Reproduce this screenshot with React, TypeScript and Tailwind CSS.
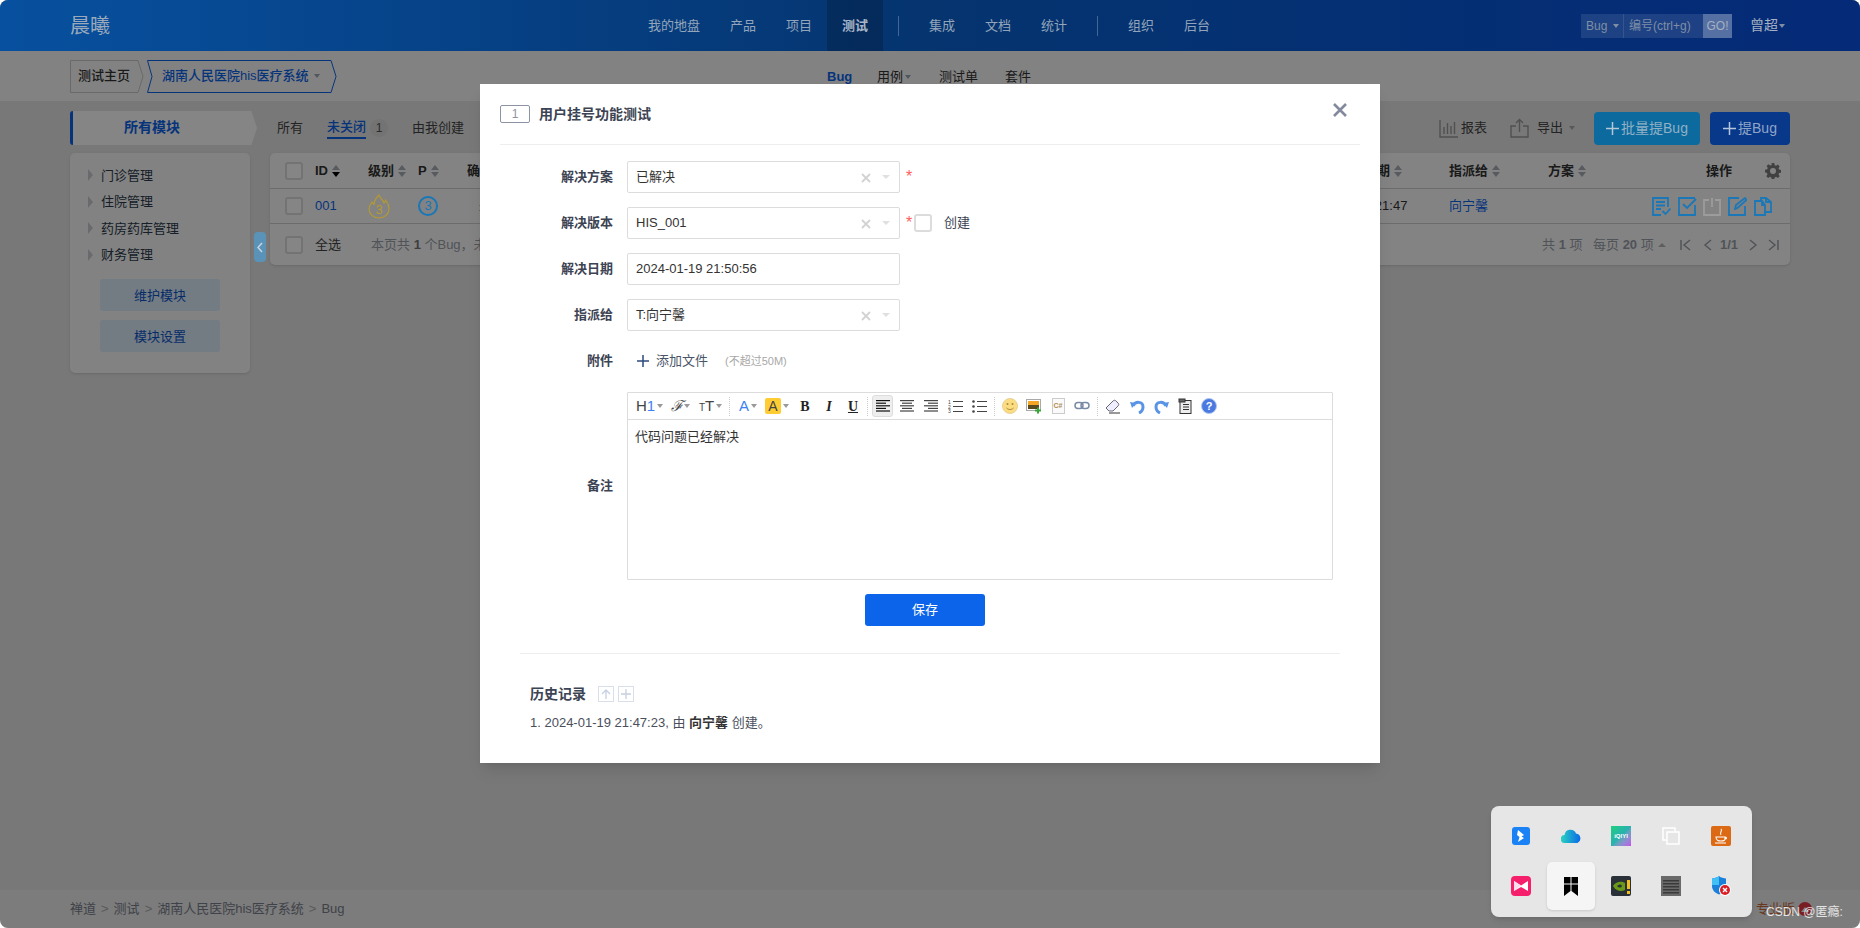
import React from "react";

const Caret = ({ c = "border-t-[#9aa5b5]", cls = "" }: { c?: string; cls?: string }) => (
  <span className={`inline-block w-0 h-0 border-x-[3.5px] border-x-transparent border-t-[4px] ${c} ${cls}`} />
);

const Sort = ({ down = false }: { down?: boolean }) => (
  <span className="inline-flex flex-col gap-[2px] ml-[4px] align-middle">
    <span className="w-0 h-0 border-x-[4.5px] border-x-transparent border-b-[5px] border-b-[#a8adb5]" />
    <span className={`w-0 h-0 border-x-[4.5px] border-x-transparent border-t-[5px] ${down ? "border-t-black" : "border-t-[#a8adb5]"}`} />
  </span>
);

const Check = ({ cls = "" }: { cls?: string }) => (
  <span className={`block w-[18px] h-[18px] bg-white border-2 border-[#dcdcdc] rounded-[3px] ${cls}`} />
);

const Tree = ({ t }: { t: string }) => (
  <div className="h-[26.6px] flex items-center">
    <span className="w-0 h-0 border-y-[6px] border-y-transparent border-l-[5px] border-l-[#c8ccd2] ml-[18px] mr-[8px]" />
    <span className="text-[13px] text-[#2c3a4c]">{t}</span>
  </div>
);

const Select = ({ v }: { v: string }) => (
  <div className="w-[273px] h-[32px] border border-[#dcdcdc] rounded-[2px] flex items-center pl-[8px] text-[13px] text-[#333]">
    <span className="flex-1">{v}</span>
    <svg width="10" height="10" viewBox="0 0 10 10" className="mr-[11px] mt-[1px]">
      <path d="M1 1l8 8M9 1l-8 8" stroke="#d2d2d2" strokeWidth="1.8" />
    </svg>
    <Caret c="border-t-[#e0e0e0]" cls="mr-[9px] border-x-[4px]" />
  </div>
);

const Label = ({ t }: { t: string }) => (
  <div className="w-[113px] mr-[14px] text-right text-[13px] font-bold text-[#3c4353]">{t}</div>
);

const Star = () => <span className="text-[#ff5d5d] text-[16px] ml-[6px] leading-none w-[8px]">*</span>;

const NavItem = ({ t, on = false }: { t: string; on?: boolean }) => (
  <div className={`w-[56px] h-[51px] flex items-center justify-center text-[13px] ${on ? "bg-black/20 font-bold text-[#a8b5c8]" : "text-[#93a5bb]"}`}>{t}</div>
);

const Lines = ({ ws, dark = false }: { ws: [number, number][]; dark?: boolean }) => (
  <svg width="16" height="14" viewBox="0 0 16 14">
    {ws.map(([x, w], i) => (
      <rect key={i} x={x} y={i * 2.6 + 1} width={w} height="1.2" fill={dark ? "#111" : "#444"} />
    ))}
  </svg>
);

const Tb = ({ children, cls = "w-[24px]" }: { children: React.ReactNode; cls?: string }) => (
  <div className={`h-[22px] flex items-center justify-center shrink-0 ${cls}`}>{children}</div>
);

const Sep = ({ cls = "" }: { cls?: string }) => (
  <span className={`w-px h-[19px] border-l border-dotted border-[#ccc] shrink-0 ${cls}`} />
);

const RowIcon = ({ children }: { children: React.ReactNode }) => (
  <svg width="19" height="19" viewBox="0 0 19 19" fill="none" stroke="currentColor" strokeWidth="1.8">
    {children}
  </svg>
);

const TrayCell = ({ children, on = false }: { children: React.ReactNode; on?: boolean }) => (
  <div className={`w-[48px] h-[48px] flex items-center justify-center rounded-[5px] ${on ? "bg-[#f5f5f5] shadow-sm" : ""}`}>{children}</div>
);

export default function App() {
  return (
    <div className="w-[1860px] h-[928px] bg-white font-['Liberation_Sans','Noto_Sans_CJK_SC',sans-serif]">
      <div className="relative w-full h-full overflow-hidden rounded-[8px] bg-[#e6e6e6] flex flex-col">
        {/* header */}
        <header className="relative z-10 h-[51px] shrink-0 bg-gradient-to-r from-[#07509f] via-[#05346f] to-[#052a78] flex items-center pl-[70px]">
          <div className="w-[563px] text-[20px] text-[#9aa9bb] leading-none">晨曦</div>
          <div className="w-[82px] h-[51px] flex items-center justify-center text-[13px] text-[#93a5bb]">我的地盘</div>
          <NavItem t="产品" />
          <NavItem t="项目" />
          <NavItem t="测试" on />
          <span className="w-px h-[20px] bg-white/25 mx-[15px]" />
          <NavItem t="集成" />
          <NavItem t="文档" />
          <NavItem t="统计" />
          <span className="w-px h-[20px] bg-white/25 mx-[15px]" />
          <NavItem t="组织" />
          <NavItem t="后台" />
          <div className="ml-[356px] flex h-[24px] w-[151px] bg-white/10 text-[12px] text-[#7f8ea5] items-center">
            <div className="w-[43px] h-full flex items-center pl-[5px] gap-[6px] border-r border-white/10">Bug<Caret c="border-t-[#7f8ea5]" /></div>
            <div className="w-[79px] pl-[5px]">编号(ctrl+g)</div>
            <div className="w-[29px] h-full flex items-center justify-center bg-white/25 text-[#a5b0c0]">GO!</div>
          </div>
          <div className="ml-[18px] text-[14px] text-[#a5b0c0] flex items-center gap-[1px]">曾超<Caret c="border-t-[#7f8ea5]" /></div>
        </header>

        {/* sub header */}
        <div className="h-[50px] shrink-0 bg-[#fafafa] flex items-center pl-[70px] relative">
          <div className="relative w-[73px] h-[33px] flex items-center pl-[8px] text-[13px] font-medium text-[#333]">
            <svg width="74" height="33" viewBox="0 0 74 33" className="absolute left-0 top-0" fill="none">
              <path d="M.5.5H68L73 16.5L68 32.5H.5Z" stroke="#c9c9c9" />
            </svg>
            <span className="relative">测试主页</span>
          </div>
          <div className="relative w-[190px] h-[33px] ml-[4px] flex items-center pl-[15px] text-[13px] text-[#0c64eb] gap-[5px]">
            <svg width="190" height="33" viewBox="0 0 190 33" className="absolute left-0 top-0" fill="none">
              <path d="M.5.5H184L189 16.5L184 32.5H.5L5 16.5Z" stroke="#0c64eb" />
            </svg>
            <span className="relative font-medium">湖南人民医院his医疗系统</span>
            <Caret c="border-t-[#9aa5b5]" cls="relative" />
          </div>
          <div className="absolute left-[827px] top-[16px] flex items-center text-[13px] text-[#333]">
            <span className="font-bold text-[#0c64eb] w-[50px]">Bug</span>
            <span className="w-[62px] flex items-center gap-[2px]">用例<Caret /></span>
            <span className="w-[66px]">测试单</span>
            <span>套件</span>
          </div>
        </div>

        {/* main */}
        <div className="flex-1 px-[70px] pt-[10px] min-h-0">
          <div className="h-[34px] flex items-center">
            <div className="w-[187px] h-[34px] flex items-center pl-[51px] pb-[2px] bg-white border-l-[3px] border-[#0c64eb] rounded-l-[3px] text-[14px] font-bold text-[#0c64eb] [clip-path:polygon(0_0,97%_0,100%_50%,97%_100%,0_100%)]">
              所有模块
            </div>
            <span className="ml-[20px] text-[13px] text-[#444]">所有</span>
            <div className="relative ml-[24px] h-[34px] flex items-center">
              <span className="text-[13px] font-medium text-[#0c64eb] -mt-[2px]">未关闭</span>
              <span className="absolute left-0 right-0 bottom-[6px] h-[2px] bg-[#0c64eb]" />
            </div>
            <span className="ml-[4px] w-[18px] h-[18px] rounded-full bg-[#dcdcdc] text-[12px] text-[#555] flex items-center justify-center">1</span>
            <span className="ml-[24px] text-[13px] text-[#444]">由我创建</span>
            <div className="ml-auto flex items-center">
              <svg width="19" height="19" viewBox="0 0 19 19" className="text-[#999]" fill="none" stroke="currentColor" strokeWidth="1.4">
                <path d="M1 1v17h18M5 15V8M8.500 15V4M12 15V7M15.500 15V3" />
              </svg>
              <span className="ml-[3px] text-[13px] text-[#444]">报表</span>
              <svg width="19" height="20" viewBox="0 0 19 20" className="ml-[23px] text-[#999]" fill="none" stroke="currentColor" strokeWidth="1.4">
                <path d="M6 8H1v11h17V8h-5M9.500 14V2M6 5l3.500-3.500L13 5" />
              </svg>
              <span className="ml-[8px] text-[13px] text-[#444]">导出</span>
              <Caret c="border-t-[#aaa]" cls="ml-[6px]" />
              <div className="relative z-10 ml-[19px] w-[106px] h-[33px] rounded-[4px] bg-[#0d6a9e] flex items-center justify-center text-[14px] text-[#8fb0c5] gap-[2px]">
                <svg width="13" height="13" viewBox="0 0 13 13"><path d="M6.500 0v13M0 6.500h13" stroke="#b5c8d5" strokeWidth="1.500" /></svg>
                批量提Bug
              </div>
              <div className="relative z-10 ml-[10px] w-[80px] h-[33px] rounded-[4px] bg-[#08388a] flex items-center justify-center text-[14px] text-[#8fa5c8] gap-[2px]">
                <svg width="13" height="13" viewBox="0 0 13 13"><path d="M6.500 0v13M0 6.500h13" stroke="#b5c5dd" strokeWidth="1.500" /></svg>
                提Bug
              </div>
            </div>
          </div>

          <div className="flex mt-[8px] items-start">
            <aside className="w-[180px] h-[220px] shrink-0 bg-[#fafafa] rounded-[5px] shadow-sm pt-[9px]">
              <Tree t="门诊管理" />
              <Tree t="住院管理" />
              <Tree t="药房药库管理" />
              <Tree t="财务管理" />
              <div className="mt-[11px] mx-[30px] flex flex-col gap-[9px]">
                <div className="h-[32px] rounded-[3px] bg-[#dcecfc] flex items-center justify-center text-[13px] text-[#0c55c8]">维护模块</div>
                <div className="h-[32px] rounded-[3px] bg-[#dcecfc] flex items-center justify-center text-[13px] text-[#0c55c8]">模块设置</div>
              </div>
            </aside>
            <div className="w-[20px] shrink-0 pt-[79px] pl-[4px]">
              <div className="relative z-10 w-[12px] h-[30px] rounded-[4px] bg-[#5b93b8] flex items-center justify-center">
                <svg width="6" height="11" viewBox="0 0 6 11" fill="none"><path d="M5 1L1 5.500L5 10" stroke="#c5d5e0" strokeWidth="1.500" /></svg>
              </div>
            </div>

            <div className="w-[1520px] bg-[#fcfcfc] rounded-[5px] shadow-sm text-[13px]">
              <div className="h-[36px] flex items-center border-b border-[#cfcfcf] font-bold text-[#333]">
                <div className="w-[45px] pl-[15px]"><Check /></div>
                <div className="w-[53px] flex items-center">ID<Sort down /></div>
                <div className="w-[50px] flex items-center">级别<Sort /></div>
                <div className="w-[49px] flex items-center">P<Sort /></div>
                <div className="w-[871px]">确认</div>
                <div className="w-[111px] flex items-center">创建日期<Sort /></div>
                <div className="w-[99px] flex items-center">指派给<Sort /></div>
                <div className="w-[158px] flex items-center">方案<Sort /></div>
                <div className="w-[59px]">操作</div>
                <svg width="16" height="16" viewBox="0 0 16 16">
                  <path fillRule="evenodd" fill="#7d7d7d" d="M6.700 0h2.600l.4 2.200 1.300.6 1.900-1.200 1.800 1.800-1.200 1.900.6 1.300 2.200.4v2.600l-2.200.4-.6 1.300 1.200 1.900-1.800 1.800-1.900-1.200-1.300.6-.4 2.200H6.700l-.4-2.200-1.300-.6-1.900 1.200-1.800-1.800 1.200-1.900-.6-1.300L0 9.300V6.700l2.200-.4.6-1.300-1.200-1.900 1.800-1.800 1.900 1.200 1.300-.6zM8 5a3 3 0 100 6 3 3 0 000-6z" />
                </svg>
              </div>
              <div className="h-[35px] flex items-center border-b border-[#cfcfcf] text-[#333]">
                <div className="w-[45px] pl-[15px]"><Check /></div>
                <div className="w-[53px] text-[#0c64eb]">001</div>
                <div className="w-[50px] relative z-10">
                  <svg width="22" height="25" viewBox="0 0 22 25" fill="none">
                    <path d="M11 1c1 4 4 4 5 8 1-1 1.500-2 1.500-3 2.500 3 3.500 6 3.500 9 0 5-4.500 9-10 9S1 20 1 15c0-3 1.500-5 3-7 .5 1.500 1 2 2 2.500C6 7 8 4 11 1z" stroke="#b59a30" strokeWidth="1.100" />
                    <text x="11" y="20" textAnchor="middle" fontSize="13" fill="#b59a30">3</text>
                  </svg>
                </div>
                <div className="w-[49px] relative z-10">
                  <span className="w-[20px] h-[20px] rounded-full border-2 border-[#1877b8] text-[#1877b8] text-[13px] flex items-center justify-center">3</span>
                </div>
                <div className="w-[871px] pl-[12px]">未确认</div>
                <div className="w-[111px]">01-19 21:47</div>
                <div className="w-[203px] text-[#0c64eb]">向宁馨</div>
                <div className="relative z-10 flex items-center gap-[7px] text-[#1b78b8]">
                  <RowIcon><path d="M16 10V1H1v17h8M4 5h9M4 8.500h9M4 12h5M10.500 14l3 3 5-5.500" /></RowIcon>
                  <RowIcon><path d="M17 8v10H1V1h16M5 7l4 4 9-9" /></RowIcon>
                  <span className="-mx-[1px] text-[#9c9c9c]"><RowIcon><path d="M6 3H1v15h16V3h-5M9 1v9" /></RowIcon></span>
                  <RowIcon><path d="M17 9v9H1V1h10M7 12l1-4 9-7 1.500 2-9 8z" /></RowIcon>
                  <RowIcon><path d="M8 4H1v14h10V8zM8 4v4h3M7 4V1h5l5 4v10h-6M12 1v4h5" /></RowIcon>
                </div>
              </div>
              <div className="h-[41px] flex items-center text-[#9aa0aa]">
                <div className="w-[45px] pl-[15px]"><Check /></div>
                <div className="w-[56px] text-[#444]">全选</div>
                <div>本页共 <b className="text-[#777]">1</b> 个Bug，未确认 1，未解决 1。</div>
                <div className="ml-auto flex items-center pr-[11px]">
                  <span className="w-[51px]">共 <b>1</b> 项</span>
                  <span className="w-[60px] whitespace-nowrap">每页 <b>20</b> 项</span>
                  <span className="ml-[5px] w-0 h-0 border-x-[4px] border-x-transparent border-b-[4px] border-b-[#b5b5b5]" />
                  <svg width="32" height="14" viewBox="0 0 32 14" className="ml-[14px]" fill="none" stroke="#9aa0aa" strokeWidth="1.500">
                    <path d="M1 2v10M10 2L4 7l6 5M31 2l-6 5 6 5" />
                  </svg>
                  <b className="ml-[8px] w-[17px]">1/1</b>
                  <svg width="30" height="14" viewBox="0 0 30 14" className="ml-[12px]" fill="none" stroke="#9aa0aa" strokeWidth="1.500">
                    <path d="M1 2l6 5-6 5M20 2l6 5-6 5M29 2v10" />
                  </svg>
                </div>
              </div>
            </div>
          </div>
        </div>

        {/* footer */}
        <footer className="h-[38px] shrink-0 bg-[#ededed] flex items-center pl-[70px] text-[13px] text-[#7a7f8c]">
          <span>禅道</span><span className="mx-[5px] text-[#aaa]">&gt;</span>
          <span>测试</span><span className="mx-[5px] text-[#aaa]">&gt;</span>
          <span>湖南人民医院his医疗系统</span><span className="mx-[5px] text-[#aaa]">&gt;</span>
          <span>Bug</span>
          <span className="ml-auto mr-[48px] flex items-center text-[#c86a3a]">
            专业版
            <span className="ml-[3px] w-[14px] h-[14px] rounded-full bg-[#e63946] flex items-center justify-center">
              <span className="w-0 h-0 border-x-[4px] border-x-transparent border-b-[5px] border-b-white" />
            </span>
          </span>
        </footer>

        {/* dim */}
        <div className="absolute inset-0 z-[5] bg-black/[0.48]" />

        {/* modal */}
        <div className="absolute z-20 left-[480px] top-[84px] w-[900px] h-[679px] bg-white px-[20px] shadow-lg">
          <div className="h-[61px] border-b border-[#eee] flex items-center relative">
            <span className="w-[30px] h-[18px] border border-[#8c94a3] rounded-[2px] flex items-center justify-center text-[12px] text-[#8c94a3]">1</span>
            <span className="ml-[9px] text-[14px] font-bold text-[#3c4353]">用户挂号功能测试</span>
            <svg width="14" height="14" viewBox="0 0 14 14" className="absolute left-[833px] top-[19px]">
              <path d="M1 1l12 12M13 1L1 13" stroke="#838a9d" strokeWidth="2.600" />
            </svg>
          </div>

          <div className="pt-[16px] flex flex-col gap-[14px]">
            <div className="flex items-center">
              <Label t="解决方案" /><Select v="已解决" /><Star />
            </div>
            <div className="flex items-center">
              <Label t="解决版本" /><Select v="HIS_001" /><Star />
              <Check />
              <span className="ml-[12px] text-[13px] text-[#3c4353]">创建</span>
            </div>
            <div className="flex items-center">
              <Label t="解决日期" />
              <div className="w-[273px] h-[32px] border border-[#dcdcdc] rounded-[2px] flex items-center pl-[8px] text-[13px] text-[#333]">2024-01-19 21:50:56</div>
            </div>
            <div className="flex items-center">
              <Label t="指派给" /><Select v="T:向宁馨" />
            </div>
            <div className="flex items-center h-[32px]">
              <Label t="附件" />
              <svg width="12" height="12" viewBox="0 0 12 12" className="ml-[10px]"><path d="M6 0v12M0 6h12" stroke="#2c4a7c" strokeWidth="1.500" /></svg>
              <span className="ml-[7px] text-[13px] text-[#4a5568]">添加文件</span>
              <span className="ml-[17px] text-[11px] text-[#a8a8a8]">(不超过50M)</span>
            </div>
          </div>

          <div className="flex items-center mt-[15px]">
            <Label t="备注" />
            <div className="w-[706px] h-[188px] border border-[#dcdcdc] rounded-[1px]">
              <div className="h-[27px] border-b border-[#dcdcdc] flex items-center pl-[8px]">
                <Tb cls="w-[33px] justify-start gap-[2px]">
                  <span className="text-[15px] text-[#444]">H<span className="text-[#3b82f6]">1</span></span><Caret c="border-t-[#999]" />
                </Tb>
                <Tb cls="w-[30px] justify-start gap-[1px] pl-[2px]">
                  <span className="text-[15px] italic font-['DejaVu_Serif',serif] text-[#444]">ℱ</span><Caret c="border-t-[#999]" />
                </Tb>
                <Tb cls="w-[30px] justify-start gap-[2px]">
                  <span className="text-[#444] leading-none"><span className="text-[10px]">T</span><span className="text-[15px]">T</span></span><Caret c="border-t-[#999]" />
                </Tb>
                <Sep cls="mr-[8px]" />
                <Tb cls="w-[24px] justify-start gap-[2px]">
                  <span className="text-[15px] text-[#3b82f6] ml-[1px]">A</span><Caret c="border-t-[#999]" />
                </Tb>
                <Tb cls="w-[31px] justify-start gap-[2px] pl-[3px]">
                  <span className="w-[16px] h-[16px] rounded-[2px] bg-[#ffcc33] text-[14px] text-[#444] flex items-center justify-center">A</span><Caret c="border-t-[#999]" />
                </Tb>
                <Tb><span className="text-[14px] font-bold font-['Liberation_Serif',serif] text-[#222]">B</span></Tb>
                <Tb><span className="text-[14px] font-bold italic font-['Liberation_Serif',serif] text-[#222]">I</span></Tb>
                <Tb><span className="text-[14px] font-bold underline font-['Liberation_Serif',serif] text-[#222]">U</span></Tb>
                <Sep cls="ml-[2px]" />
                <Tb cls="w-[21px] ml-[4px] rounded-[3px] bg-[#eee] border border-[#ddd]">
                  <Lines dark ws={[[1, 14], [1, 10], [1, 14], [1, 10], [1, 14]]} />
                </Tb>
                <Tb cls="w-[24px] ml-[2px]"><Lines ws={[[1, 14], [3, 10], [1, 14], [3, 10], [1, 14]]} /></Tb>
                <Tb><Lines ws={[[1, 14], [5, 10], [1, 14], [5, 10], [1, 14]]} /></Tb>
                <Tb>
                  <svg width="15" height="14" viewBox="0 0 15 14" fill="#444">
                    <text x="0" y="4.500" fontSize="5">1</text><text x="0" y="9.500" fontSize="5">2</text><text x="0" y="14" fontSize="5">3</text>
                    <rect x="5" y="2" width="10" height="1" /><rect x="5" y="7" width="10" height="1" /><rect x="5" y="12" width="10" height="1" />
                  </svg>
                </Tb>
                <Tb>
                  <svg width="15" height="14" viewBox="0 0 15 14" fill="#444">
                    <circle cx="1.500" cy="2.500" r="1.300" /><circle cx="1.500" cy="7.500" r="1.300" /><circle cx="1.500" cy="12.500" r="1.300" />
                    <rect x="5" y="2" width="10" height="1" /><rect x="5" y="7" width="10" height="1" /><rect x="5" y="12" width="10" height="1" />
                  </svg>
                </Tb>
                <Sep cls="ml-[3px]" />
                <Tb cls="w-[24px] ml-[3px]">
                  <svg width="16" height="16" viewBox="0 0 16 16">
                    <circle cx="8" cy="8" r="7.500" fill="#fbdc80" stroke="#e8d098" />
                    <circle cx="5.500" cy="6" r="1" fill="#a88a40" /><circle cx="10.500" cy="6" r="1" fill="#a88a40" />
                    <path d="M4.500 10c2 2 5 2 7 0" stroke="#a88a40" fill="none" />
                  </svg>
                </Tb>
                <Tb>
                  <svg width="16" height="16" viewBox="0 0 16 16">
                    <rect x=".5" y="1.500" width="14" height="11" fill="#fff" stroke="#aaa" />
                    <rect x="2" y="3" width="11" height="4" fill="#f5a623" /><rect x="2" y="7" width="11" height="4" fill="#5a4a20" />
                    <path d="M12 9.500v6M9 12.500h6" stroke="#3aa53a" strokeWidth="2" />
                  </svg>
                </Tb>
                <Tb>
                  <div className="w-[13px] h-[16px] border border-[#ccc] bg-[#fafafa] text-[7px] text-[#b08a50] font-bold flex items-center justify-center">C#</div>
                </Tb>
                <Tb>
                  <svg width="16" height="10" viewBox="0 0 16 10" fill="none" stroke="#7a8aa5" strokeWidth="1.500">
                    <rect x="1" y="1.500" width="8" height="6" rx="3" /><rect x="7" y="1.500" width="8" height="6" rx="3" />
                  </svg>
                </Tb>
                <Sep cls="ml-[3px]" />
                <Tb cls="w-[24px] ml-[3px]">
                  <svg width="16" height="15" viewBox="0 0 16 15" fill="none">
                    <path d="M1 9l7-7c1-1 2-1 3 0l2 2c1 1 1 2 0 3l-5 5H4z" fill="#eef" stroke="#667" />
                    <path d="M4 14h11" stroke="#333" />
                  </svg>
                </Tb>
                <Tb>
                  <svg width="15" height="15" viewBox="0 0 15 15" fill="none">
                    <path d="M3 7C5 2 13 2 13 8c0 3-2 5-4 6" stroke="#5a94e4" strokeWidth="3" />
                    <path d="M0 3l6 1-4 5z" fill="#5a94e4" />
                  </svg>
                </Tb>
                <Tb>
                  <svg width="15" height="15" viewBox="0 0 15 15" fill="none">
                    <path d="M12 7C10 2 2 2 2 8c0 3 2 5 4 6" stroke="#5a94e4" strokeWidth="3" />
                    <path d="M15 3l-6 1 4 5z" fill="#5a94e4" />
                  </svg>
                </Tb>
                <Tb>
                  <svg width="14" height="16" viewBox="0 0 14 16" fill="none" stroke="#333">
                    <rect x="2" y="2.500" width="11" height="13" fill="#eee" />
                    <rect x="1" y="1" width="6" height="3" fill="#666" />
                    <path d="M5 6.500h6M5 9h6M5 11.500h6" />
                  </svg>
                </Tb>
                <Tb>
                  <svg width="16" height="16" viewBox="0 0 16 16">
                    <circle cx="8" cy="8" r="7.500" fill="#4a7ae0" stroke="#b0c4f0" />
                    <text x="8" y="12" textAnchor="middle" fontSize="11" fontWeight="bold" fill="#fff">?</text>
                  </svg>
                </Tb>
              </div>
              <div className="px-[7px] pt-[7px] text-[13px] text-[#333] leading-[20px]">代码问题已经解决</div>
            </div>
          </div>

          <div className="mt-[14px] flex justify-center pr-[10px]">
            <div className="w-[120px] h-[32px] rounded-[3px] bg-[#0c64eb] flex items-center justify-center text-[13px] text-white">保存</div>
          </div>

          <div className="mt-[27px] mx-[20px] border-t border-[#eee] pt-[32px] px-[10px]">
            <div className="flex items-center h-[16px]">
              <span className="text-[14px] font-bold text-[#3c4353]">历史记录</span>
              <span className="ml-[12px] w-[16px] h-[16px] border border-[#d8deea] flex items-center justify-center">
                <svg width="10" height="10" viewBox="0 0 10 10" fill="none"><path d="M5 10V1M1 5l4-4 4 4" stroke="#c5d0e0" strokeWidth="1.300" /></svg>
              </span>
              <span className="ml-[4px] w-[16px] h-[16px] border border-[#d8deea] flex items-center justify-center">
                <svg width="10" height="10" viewBox="0 0 10 10"><path d="M5 0v10M0 5h10" stroke="#c5d0e0" strokeWidth="1.300" /></svg>
              </span>
            </div>
            <div className="mt-[12px] text-[13px] text-[#4a4f5c] leading-[18px]">
              1. 2024-01-19 21:47:23, 由 <b className="text-[#333]">向宁馨</b> 创建。
            </div>
          </div>
        </div>

        {/* tray */}
        <div className="absolute z-20 left-[1491px] top-[806px] w-[261px] h-[111px] rounded-[8px] bg-[#e6e6e7] shadow-md pl-[6px] pt-[6px] grid grid-cols-[repeat(5,48px)] grid-rows-[48px_48px] gap-[2px]">
          <TrayCell>
            <svg width="18" height="18" viewBox="0 0 18 18">
              <rect width="18" height="18" rx="3" fill="#1a82f5" />
              <path d="M6 3l6 5-2.500 1.500L12 11l-6 4 1.500-5L5 8z" fill="#fff" />
            </svg>
          </TrayCell>
          <TrayCell>
            <svg width="21" height="14" viewBox="0 0 21 14">
              <defs>
                <linearGradient id="cl" x1="0" x2="1"><stop offset="0" stopColor="#2ad4c0" /><stop offset="1" stopColor="#0a6ae8" /></linearGradient>
              </defs>
              <path d="M4 14a4 4 0 01-.5-8A6 6 0 0115 4.500 5 5 0 0116.500 14z" fill="url(#cl)" />
            </svg>
          </TrayCell>
          <TrayCell>
            <div className="w-[20px] h-[20px] bg-gradient-to-br from-[#1fd07a] via-[#2ab0b0] to-[#c050f0] flex items-center justify-center text-[6px] font-bold text-white">iQIYI</div>
          </TrayCell>
          <TrayCell>
            <svg width="18" height="18" viewBox="0 0 18 18" fill="none" stroke="#fff" strokeWidth="1.500">
              <path d="M4 13H1V1h12v3" /><rect x="5" y="5" width="12" height="12" />
            </svg>
          </TrayCell>
          <TrayCell>
            <svg width="20" height="20" viewBox="0 0 20 20" fill="none">
              <rect width="20" height="20" rx="2" fill="#dc6a14" />
              <path d="M10 3c2 2-2 3 0 6M5 11h9v2c0 2-2 2-4 2s-5 0-5-4zM14 11c2 0 2 2 0 2M4 17h11" stroke="#fff" strokeWidth="1.100" />
            </svg>
          </TrayCell>
          <TrayCell>
            <svg width="20" height="20" viewBox="0 0 20 20">
              <rect width="20" height="20" rx="4" fill="#f51f6c" />
              <path d="M3 5l7 4.500L17 5v10l-7-4-7 4z" fill="#fff" />
              <path d="M3 5l7 4.500L3 15z" fill="#fde" />
            </svg>
          </TrayCell>
          <TrayCell on>
            <svg width="14" height="19" viewBox="0 0 14 19" fill="#000">
              <rect width="6.500" height="6.500" /><rect x="7.500" width="6.500" height="6.500" />
              <path d="M0 7.500h6.500v6.500L0 19zM7.500 7.500H14V19l-6.500-5z" />
            </svg>
          </TrayCell>
          <TrayCell>
            <svg width="20" height="20" viewBox="0 0 20 20">
              <rect width="20" height="20" rx="2" fill="#2a3038" />
              <path d="M2 10c3-5 9-5 12-3v7c-4 2-9 1-12-4z" fill="#6a9a18" />
              <path d="M6 10c2-2 4-2 5 0-1 2-3 2-5 0z" fill="#2a3038" />
              <rect x="16" y="4" width="3" height="9" fill="#f0c020" /><rect x="16" y="15" width="3" height="3" fill="#f0c020" />
            </svg>
          </TrayCell>
          <TrayCell>
            <svg width="20" height="20" viewBox="0 0 20 20">
              <rect width="20" height="20" fill="#6a6a6a" />
              {[4, 7, 10, 13, 16].map((y) => (
                <rect key={y} x="2" y={y} width="16" height="1.500" fill="#3a3a3a" />
              ))}
            </svg>
          </TrayCell>
          <TrayCell>
            <svg width="20" height="20" viewBox="0 0 20 20">
              <path d="M8 0c2 2 5 2 7 2.500V10c0 4-3 7-7 8.500C4 17 1 14 1 10V2.500C3 2 6 2 8 0z" fill="#1a80d8" />
              <path d="M8 0c-2 2-5 2-7 2.500V9h7z" fill="#40c0f5" />
              <circle cx="14" cy="14" r="6" fill="#fff" />
              <circle cx="14" cy="14" r="5" fill="#d81f26" />
              <path d="M12 12l4 4M16 12l-4 4" stroke="#fff" strokeWidth="1.400" />
            </svg>
          </TrayCell>
        </div>

        {/* watermark */}
        <div className="absolute z-30 left-[1766px] top-[904px] text-[12px] leading-[16px] text-white/80 whitespace-nowrap">CSDN @匿瘾:</div>
      </div>
    </div>
  );
}
